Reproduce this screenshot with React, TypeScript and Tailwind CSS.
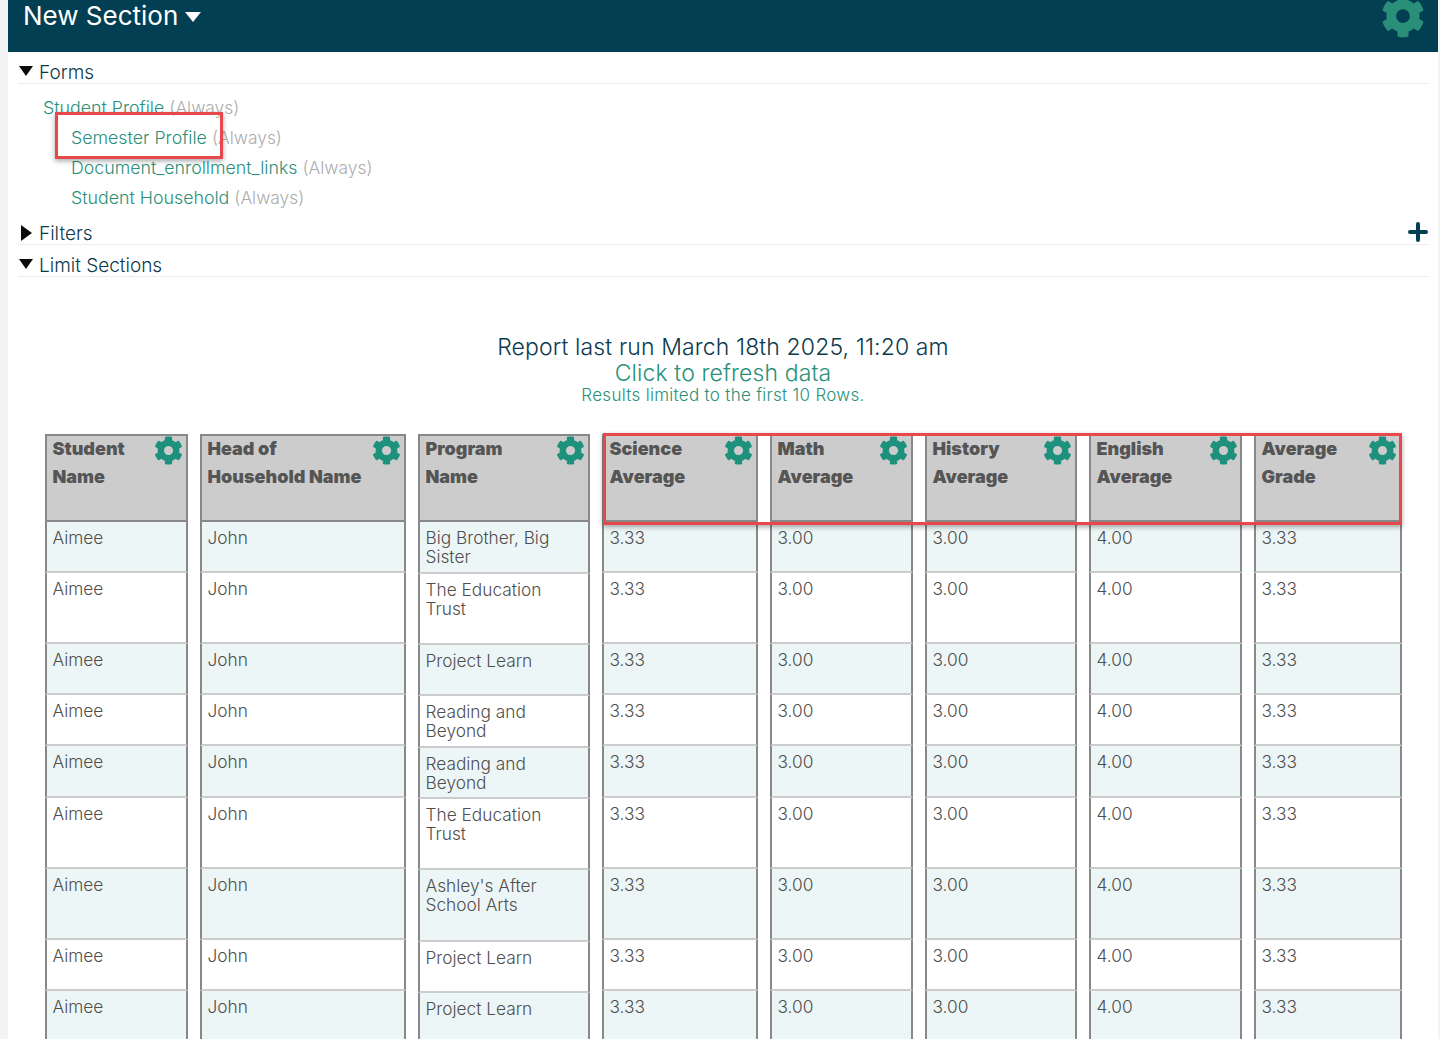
import { FaCog } from "react-icons/fa";

const stdH = ["h-[51px]", "h-[71px]", "h-[51px]", "h-[51px]", "h-[52px]", "h-[71px]", "h-[71px]", "h-[51px]", "h-[60px]"];
const progH = ["h-[52px]", "h-[71px]", "h-[51px]", "h-[52px]", "h-[51px]", "h-[71px]", "h-[72px]", "h-[51px]", "h-[60px]"];

const columns = [
  { w: "w-[143px]", t: ["Student", "Name"], gear: "right-[3px]", v: Array(9).fill("Aimee") },
  { w: "w-[206px]", t: ["Head of", "Household Name"], gear: "right-[3px]", v: Array(9).fill("John") },
  {
    w: "w-[172px]",
    t: ["Program", "Name"],
    gear: "right-[3px]",
    prog: true,
    v: ["Big Brother, Big Sister", "The Education Trust", "Project Learn", "Reading and Beyond", "Reading and Beyond", "The Education Trust", "Ashley's After School Arts", "Project Learn", "Project Learn"],
  },
  { w: "w-[156px]", t: ["Science", "Average"], gear: "right-[3px]", v: Array(9).fill("3.33") },
  { w: "w-[143px]", t: ["Math", "Average"], gear: "right-[3px]", v: Array(9).fill("3.00") },
  { w: "w-[152px]", t: ["History", "Average"], gear: "right-[3px]", v: Array(9).fill("3.00") },
  { w: "w-[153px]", t: ["English", "Average"], gear: "right-[2px]", v: Array(9).fill("4.00") },
  { w: "w-[148px]", t: ["Average", "Grade"], gear: "right-[3px]", v: Array(9).fill("3.33") },
];

function Section({ label, open }: { label: string; open: boolean }) {
  return (
    <div className="mx-[10px] flex h-[32px] items-end border-b border-[#ececec] text-[19px] font-light leading-[20px] text-[#0c3a4c]">
      {open ? (
        <span className="mb-[7px] mr-[6px] ml-[1px] h-0 w-0 border-x-[7.5px] border-t-[10px] border-x-transparent border-t-[#0b0b0b]" />
      ) : (
        <span className="mb-[3px] mr-[7px] ml-[3px] h-0 w-0 border-y-[8px] border-l-[11px] border-y-transparent border-l-[#0b0b0b]" />
      )}
      <span>{label}</span>
    </div>
  );
}

function Form({ name, first }: { name: string; first?: boolean }) {
  return (
    <div className={`h-[30px] leading-[30px] ${first ? "pl-[35px]" : "pl-[63px]"}`}>
      <span className="text-[#2a9079]">{name}</span> <span className="text-[17.4px] text-[#adadad]">(Always)</span>
    </div>
  );
}

export default function App() {
  return (
    <div className="relative h-[1039px] w-[1440px] overflow-hidden bg-[#f3f3f3] pl-[8px] pr-[2px] font-['Inter','Liberation_Sans',sans-serif]">
      <div className="h-full bg-white">
        <header className="flex h-[52px] items-start justify-between overflow-hidden bg-[#033f53] pl-[15px] pr-[13px]">
          <div className="flex items-center gap-[7px] text-[26px] leading-[32px] text-white">
            <span>New Section</span>
            <span className="mt-[2px] h-0 w-0 border-x-[8px] border-t-[10px] border-x-transparent border-t-white" />
          </div>
          <FaCog className="-mt-[6px] text-[44px] text-[#2a8f79]" />
        </header>

        <Section label="Forms" open />
        <div className="pt-[9px] text-[17.8px] font-light text-[#2a9079]">
          <Form name="Student Profile" first />
          <Form name="Semester Profile" />
          <Form name="Document_enrollment_links" />
          <Form name="Student Household" />
        </div>
        <div className="relative">
          <Section label="Filters" open={false} />
          <span className="absolute right-[10px] top-[9px] h-[20px] w-[20px]">
            <span className="absolute left-0 top-[8px] h-[4px] w-[20px] rounded bg-[#033f53]" />
            <span className="absolute left-[8px] top-0 h-[20px] w-[4px] rounded bg-[#033f53]" />
          </span>
        </div>
        <Section label="Limit Sections" open />

        <div className="mt-[56px] flex flex-col items-center">
          <div className="text-[23px] font-light leading-[28px] tracking-[0.12px] text-[#0c3a4c]">Report last run March 18th 2025, 11:20 am</div>
          <div className="text-[23px] font-light leading-[24px] tracking-[0.12px] text-[#2a9079]">Click to refresh data</div>
          <div className="text-[17px] font-light leading-[20px] tracking-[0.3px] text-[#2a9079]">Results limited to the first 10 Rows.</div>
        </div>

        <div className="mt-[29px] flex gap-[12px] pl-[37px]">
          {columns.map((c) => (
            <div key={c.t.join()} className={`${c.w} shrink-0`}>
              <div className="relative h-[88px] border-2 border-[#888] bg-[#cccccc] pl-[5.5px] text-[18px] font-black leading-[28px] text-[#555]">
                <div className="-mt-[1px]">{c.t[0]}</div>
                <div>{c.t[1]}</div>
                <FaCog className={`absolute top-[0px] text-[29px] text-[#1d917b] ${c.gear}`} />
              </div>
              {c.v.map((v, i) => (
                <div
                  key={i}
                  className={`${(c.prog ? progH : stdH)[i]} border-x-2 border-b-2 border-x-[#888] border-b-[#ccc] px-[5.5px] pt-[5.5px] text-[17.3px] font-light leading-[19.5px] text-[#4f4f4f] ${i % 2 === 0 ? "bg-[#edf6f6]" : "bg-white"}`}
                >
                  {v}
                </div>
              ))}
            </div>
          ))}
        </div>
      </div>

      <div className="absolute left-[55px] top-[112px] h-[47px] w-[168px] border-[3px] border-[#e8474c] shadow-[0_2px_5px_rgba(0,0,0,0.35)]" />
      <div className="absolute left-[603px] top-[433px] h-[92px] w-[799px] border-[3px] border-[#e8474c] shadow-[0_2px_5px_rgba(0,0,0,0.35)]" />
    </div>
  );
}
